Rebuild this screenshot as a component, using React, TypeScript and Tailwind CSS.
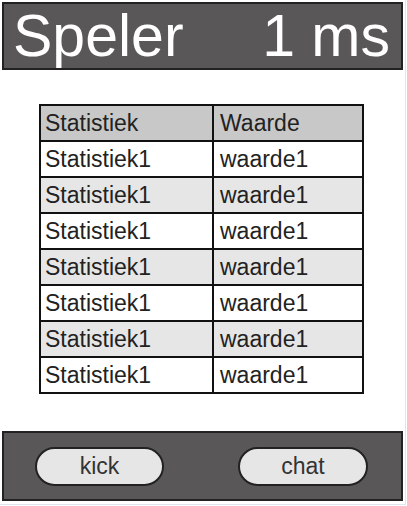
import React from "react";

const rows = Array.from({ length: 7 }, () => ["Statistiek1", "waarde1"]);

export default function App() {
  return (
    <div
      className="w-[407px] h-[506px] bg-white"
      style={{ fontFamily: '"Liberation Sans", Arial, sans-serif' }}
    >
      <div className="w-[406px] h-[505px] border-r border-b border-[#dfe6ee] pt-[2px] pl-[2px] pr-[2px]">
        <div className="h-[68px] w-[401px] bg-[#595757] border-2 border-[#222] flex items-center justify-between pl-[9px] pr-[11px] text-white text-[59px] leading-none">
          <span>Speler</span>
          <span>1 ms</span>
        </div>
        <div className="mt-[34px] pl-[37px]">
          <table className="border-collapse border-2 border-[#111] text-[23px] text-[#222] w-[325px]">
            <tbody>
              <tr className="bg-[#c8c8c8]">
                <td className="border-2 border-[#111] h-[36px] w-[173px] pl-[4px] leading-none">Statistiek</td>
                <td className="border-2 border-[#111] h-[36px] pl-[6px] leading-none">Waarde</td>
              </tr>
              {rows.map((r, i) => (
                <tr key={i} className={i % 2 === 1 ? "bg-[#e6e6e6]" : "bg-white"}>
                  <td className="border-2 border-[#111] h-[36px] pl-[4px] leading-none">{r[0]}</td>
                  <td className="border-2 border-[#111] h-[36px] pl-[6px] leading-none">{r[1]}</td>
                </tr>
              ))}
            </tbody>
          </table>
        </div>
        <div className="mt-[37px] h-[70px] w-[401px] bg-[#595757] border-2 border-[#222] flex items-center justify-between pl-[31px] pr-[33px]">
          <button className="w-[129px] h-[39px] rounded-full bg-[#e6e6e6] border-2 border-[#222] text-[23px] text-[#333] leading-none">
            kick
          </button>
          <button className="w-[130px] h-[39px] rounded-full bg-[#e6e6e6] border-2 border-[#222] text-[23px] text-[#333] leading-none">
            chat
          </button>
        </div>
      </div>
    </div>
  );
}
